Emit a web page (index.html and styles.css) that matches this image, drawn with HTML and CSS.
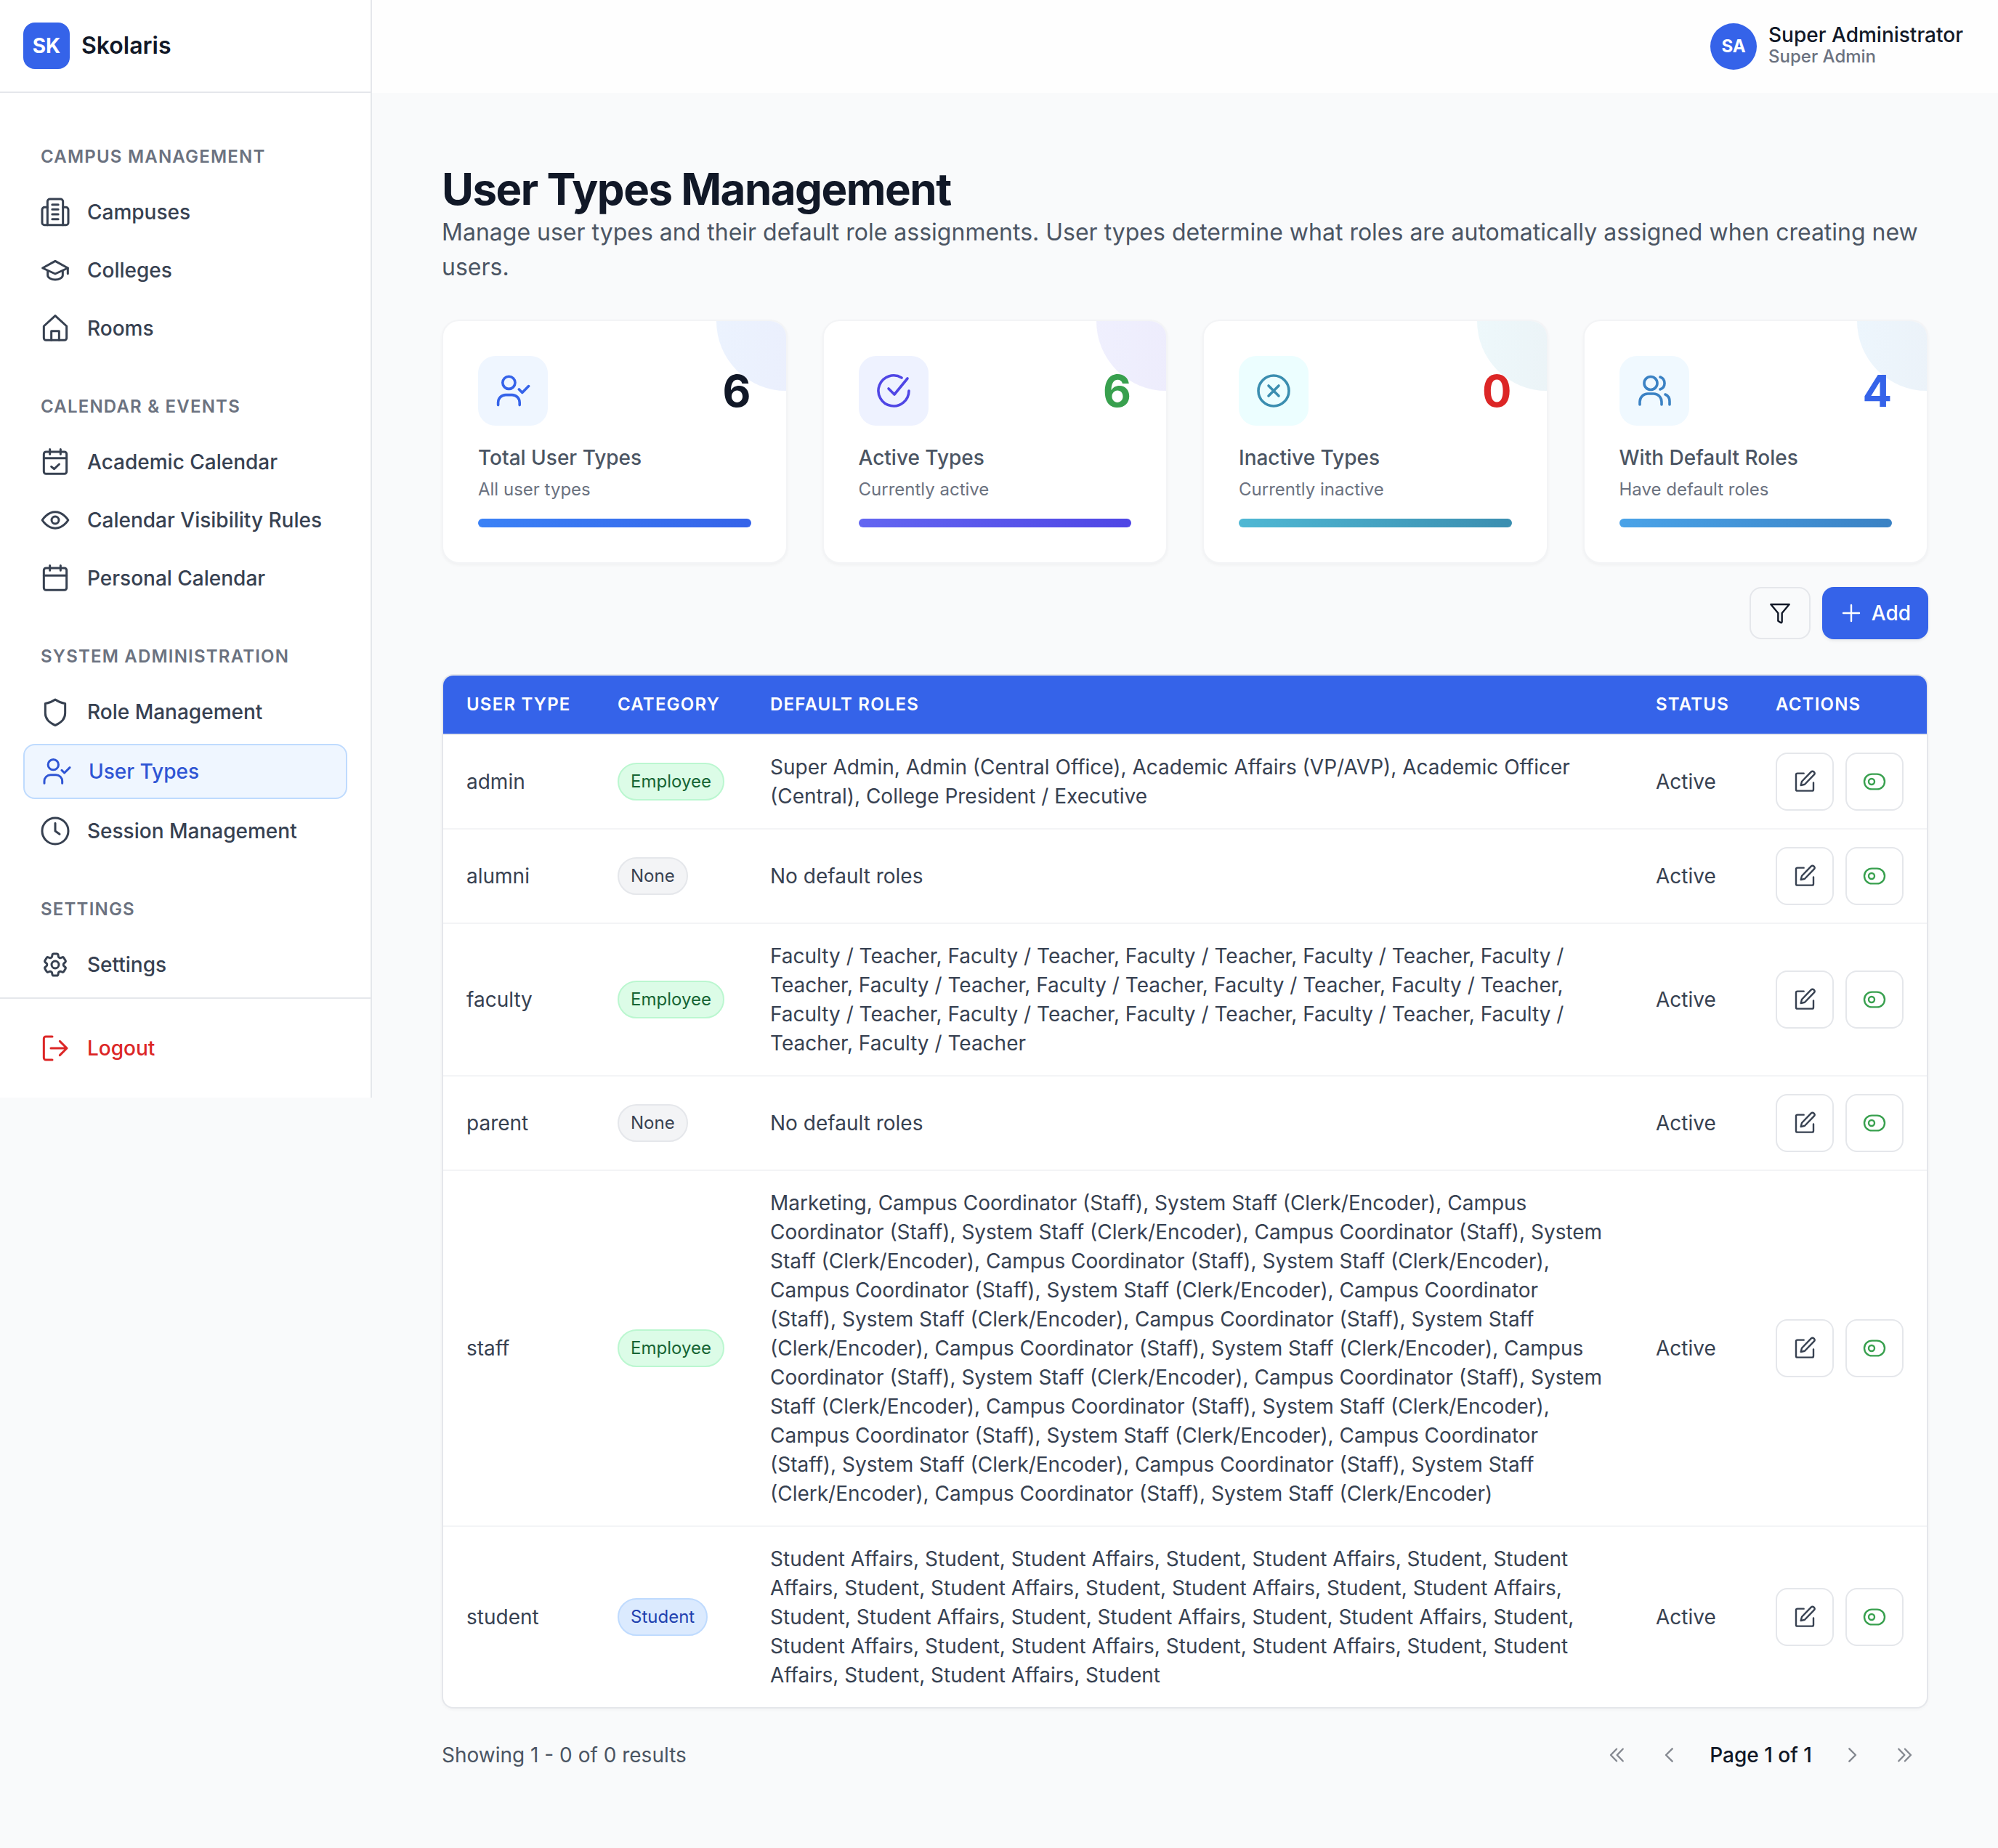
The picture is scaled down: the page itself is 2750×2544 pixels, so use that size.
FILE: index.html
```html
<!DOCTYPE html>
<html lang="en">
<head>
<meta charset="utf-8">
<title>User Types Management</title>
<link rel="stylesheet" href="styles.css">
</head>
<body>
<svg class="sprite" aria-hidden="true">
  <symbol id="i-campus" viewBox="0 0 24 24"><path d="M5.6 22.6V3.2a2 2 0 0 1 2-2h8.8a2 2 0 0 1 2 2v19.4"/><path d="M5.6 8H3.2a2 2 0 0 0-2 2v10.8a1.8 1.8 0 0 0 1.8 1.8h18a1.8 1.8 0 0 0 1.8-1.8V10a2 2 0 0 0-2-2h-2.4"/><path d="M9.5 5.8h5M9.5 9.8h5M9.5 13.8h5M9.5 17.8h5"/></symbol>
  <symbol id="i-cap" viewBox="0 0 24 24"><path d="M1.6 10.200 12 4.400l10.400 5.800L12 15z"/><path d="M5.800 12.600v3.600c0 2 3 3.600 6.200 3.600s6.200-1.600 6.200-3.600v-3.600"/><path d="M22.400 10.200v4.600"/></symbol>
  <symbol id="i-home" viewBox="0 0 24 24"><path d="M2.600 10.200 12 1.600l9.400 8.600v9.800a1.800 1.800 0 0 1-1.800 1.800H4.400a1.800 1.800 0 0 1-1.800-1.800z"/><path d="M8.800 21.800v-7.600h6.400v7.600"/></symbol>
  <symbol id="i-calcheck" viewBox="0 0 24 24"><rect x="2.600" y="3.600" width="18.800" height="18.200" rx="1.800"/><path d="M2.600 8.800h18.800M7.600 1.500v4M16.400 1.500v4M8.800 15.800l2.300 2 4.200-4"/></symbol>
  <symbol id="i-eye" viewBox="0 0 24 24"><path d="M1.300 12S5.400 5.300 12 5.300 22.700 12 22.700 12 18.600 18.700 12 18.700 1.300 12 1.300 12z"/><circle cx="12" cy="12" r="3"/></symbol>
  <symbol id="i-cal" viewBox="0 0 24 24"><rect x="2.600" y="3.600" width="18.800" height="18.200" rx="1.800"/><path d="M2.600 9.800h18.800M7.600 1.500v4M16.400 1.500v4"/></symbol>
  <symbol id="i-shield" viewBox="0 0 24 24"><path d="M12 1.800c2.400 1.700 5 2.800 8.200 3.300v8c0 4.400-3.200 7.900-8.200 10-5-2.100-8.200-5.600-8.200-10v-8C7 4.600 9.600 3.500 12 1.800z"/></symbol>
  <symbol id="i-usercheck" viewBox="0 0 24 24"><circle cx="9.200" cy="6.400" r="4.300"/><path d="M1.800 21.800v-1.800a5.200 5.200 0 0 1 5.200-5.200h4.400a5.200 5.200 0 0 1 5.200 5.200v1.800"/><path d="m16.200 11 2.200 2.200 4.400-4.400"/></symbol>
  <symbol id="i-clock" viewBox="0 0 24 24"><circle cx="12" cy="12" r="10.800"/><path d="M12 5.600V12l3.600 2.600"/></symbol>
  <symbol id="i-gear" viewBox="0 0 24 24"><path d="M9.594 3.940c.09-.542.56-.94 1.110-.94h2.593c.55 0 1.020.398 1.110.94l.213 1.281c.063.374.313.686.645.870.074.04.147.083.22.127.325.196.72.257 1.075.124l1.217-.456a1.125 1.125 0 0 1 1.370.49l1.296 2.247a1.125 1.125 0 0 1-.26 1.431l-1.003.827c-.293.241-.438.613-.43.992a7.723 7.723 0 0 1 0 .255c-.008.378.137.75.43.991l1.004.827c.424.35.534.955.26 1.430l-1.298 2.247a1.125 1.125 0 0 1-1.369.491l-1.217-.456c-.355-.133-.75-.072-1.076.124a6.470 6.470 0 0 1-.22.128c-.331.183-.581.495-.644.869l-.213 1.281c-.09.543-.56.94-1.110.94h-2.594c-.55 0-1.019-.398-1.110-.94l-.213-1.281c-.062-.374-.312-.686-.644-.87a6.520 6.520 0 0 1-.22-.127c-.325-.196-.72-.257-1.076-.124l-1.217.456a1.125 1.125 0 0 1-1.369-.49l-1.297-2.247a1.125 1.125 0 0 1 .26-1.431l1.004-.827c.292-.24.437-.613.43-.991a6.932 6.932 0 0 1 0-.255c.007-.38-.138-.751-.43-.992l-1.004-.827a1.125 1.125 0 0 1-.26-1.430l1.297-2.247a1.125 1.125 0 0 1 1.370-.491l1.216.456c.356.133.751.072 1.076-.124.072-.044.146-.086.22-.128.332-.183.582-.495.644-.869l.214-1.280Z"/><circle cx="12" cy="12" r="3"/></symbol>
  <symbol id="i-logout" viewBox="0 0 24 24"><path d="M9.600 2.400H4.200a1.600 1.600 0 0 0-1.600 1.600v16a1.600 1.600 0 0 0 1.600 1.600h5.400"/><path d="M8.400 12h13.200M15.800 6.200l5.800 5.800-5.800 5.800"/></symbol>
  <symbol id="i-checkcircle" viewBox="0 0 24 24"><path d="M22.500 12A10.500 10.500 0 1 1 17.500 3"/><path d="m8.500 10.500 4 4 9-11"/></symbol>
  <symbol id="i-xcircle" viewBox="0 0 24 24"><circle cx="12" cy="12" r="10.500"/><path d="m8.500 8.500 7 7M15.500 8.500l-7 7"/></symbol>
  <symbol id="i-users" viewBox="0 0 24 24"><circle cx="9.500" cy="6.750" r="4.500"/><path d="M2 21.500v-2a5.500 5.500 0 0 1 5.500-5.500h4a5.500 5.500 0 0 1 5.500 5.500v2"/><path d="M16 2.500a4.500 4.500 0 0 1 0 8.500"/><path d="M19.500 14.500c1.900.8 3 2.600 3 4.700v2.300"/></symbol>
  <symbol id="i-filter" viewBox="0 0 24 24"><path d="M2.500 3h19L14 12v9c0 .8-.9 1.200-1.500.8L10 20v-8z"/></symbol>
  <symbol id="i-plus" viewBox="0 0 24 24"><path d="M12 3.750v16.500M3.750 12h16.500"/></symbol>
  <symbol id="i-edit" viewBox="0 0 24 24"><path d="M11 3.500H4.500A1.500 1.500 0 0 0 3 5v15a1.500 1.500 0 0 0 1.500 1.500h15A1.500 1.500 0 0 0 21 20v-7"/><path d="M18.500 2a2.100 2.100 0 0 1 3 3L12 14.800l-4 1 1-4z"/></symbol>
  <symbol id="i-toggle" viewBox="0 0 24 24"><rect x="1.500" y="4.250" width="21" height="15.500" rx="7.750"/><circle cx="9" cy="12" r="3"/></symbol>
  <symbol id="i-first" viewBox="0 0 24 24"><path d="M12 5.800 6 12l6 6.200M18.500 5.800 12.500 12l6 6.200"/></symbol>
  <symbol id="i-prev" viewBox="0 0 24 24"><path d="M15.500 5.500 9 12l6.500 6.500"/></symbol>
  <symbol id="i-next" viewBox="0 0 24 24"><path d="m8.500 5.500 6.500 6.500-6.500 6.500"/></symbol>
  <symbol id="i-last" viewBox="0 0 24 24"><path d="m5.500 5.800 6 6.200-6 6.200M12 5.800l6 6.200-6 6.200"/></symbol>
</svg>

<div class="app">
  <aside class="sidebar">
    <div class="brand">
      <div class="brand-logo">SK</div>
      <span class="brand-name">Skolaris</span>
    </div>
    <nav class="nav">
      <section class="nav-section">
        <h2 class="nav-title">Campus Management</h2>
        <a class="nav-item"><svg class="icon nav-icon"><use href="#i-campus"/></svg>Campuses</a>
        <a class="nav-item"><svg class="icon nav-icon"><use href="#i-cap"/></svg>Colleges</a>
        <a class="nav-item"><svg class="icon nav-icon"><use href="#i-home"/></svg>Rooms</a>
      </section>
      <section class="nav-section">
        <h2 class="nav-title">Calendar &amp; Events</h2>
        <a class="nav-item"><svg class="icon nav-icon"><use href="#i-calcheck"/></svg>Academic Calendar</a>
        <a class="nav-item"><svg class="icon nav-icon"><use href="#i-eye"/></svg>Calendar Visibility Rules</a>
        <a class="nav-item"><svg class="icon nav-icon"><use href="#i-cal"/></svg>Personal Calendar</a>
      </section>
      <section class="nav-section">
        <h2 class="nav-title">System Administration</h2>
        <a class="nav-item"><svg class="icon nav-icon"><use href="#i-shield"/></svg>Role Management</a>
        <a class="nav-item nav-item-active"><svg class="icon nav-icon"><use href="#i-usercheck"/></svg>User Types</a>
        <a class="nav-item"><svg class="icon nav-icon"><use href="#i-clock"/></svg>Session Management</a>
      </section>
      <section class="nav-section">
        <h2 class="nav-title">Settings</h2>
        <a class="nav-item"><svg class="icon nav-icon"><use href="#i-gear"/></svg>Settings</a>
      </section>
    </nav>
    <div class="sidebar-foot">
      <a class="nav-item nav-item-danger"><svg class="icon nav-icon"><use href="#i-logout"/></svg>Logout</a>
    </div>
  </aside>

  <div class="content">
    <header class="topbar">
      <div class="avatar">SA</div>
      <div class="user">
        <div class="user-name">Super Administrator</div>
        <div class="user-role">Super Admin</div>
      </div>
    </header>

    <main class="main">
      <h1 class="page-title">User Types Management</h1>
      <p class="page-sub">Manage user types and their default role assignments. User types determine what roles are automatically assigned when creating new users.</p>

      <div class="stats">
        <article class="stat stat-blue">
          <span class="stat-decor"></span>
          <div class="stat-top">
            <div class="stat-icon"><svg class="icon icon-48"><use href="#i-usercheck"/></svg></div>
            <div class="stat-value">6</div>
          </div>
          <div class="stat-label">Total User Types</div>
          <div class="stat-sub">All user types</div>
          <div class="stat-bar"></div>
        </article>
        <article class="stat stat-indigo">
          <span class="stat-decor"></span>
          <div class="stat-top">
            <div class="stat-icon"><svg class="icon icon-48"><use href="#i-checkcircle"/></svg></div>
            <div class="stat-value">6</div>
          </div>
          <div class="stat-label">Active Types</div>
          <div class="stat-sub">Currently active</div>
          <div class="stat-bar"></div>
        </article>
        <article class="stat stat-teal">
          <span class="stat-decor"></span>
          <div class="stat-top">
            <div class="stat-icon"><svg class="icon icon-48"><use href="#i-xcircle"/></svg></div>
            <div class="stat-value">0</div>
          </div>
          <div class="stat-label">Inactive Types</div>
          <div class="stat-sub">Currently inactive</div>
          <div class="stat-bar"></div>
        </article>
        <article class="stat stat-sky">
          <span class="stat-decor"></span>
          <div class="stat-top">
            <div class="stat-icon"><svg class="icon icon-48"><use href="#i-users"/></svg></div>
            <div class="stat-value">4</div>
          </div>
          <div class="stat-label">With Default Roles</div>
          <div class="stat-sub">Have default roles</div>
          <div class="stat-bar"></div>
        </article>
      </div>

      <div class="toolbar">
        <button class="btn btn-ghost"><svg class="icon icon-32"><use href="#i-filter"/></svg></button>
        <button class="btn btn-primary"><svg class="icon icon-32"><use href="#i-plus"/></svg>Add</button>
      </div>

      <div class="table-wrap">
        <table class="table">
          <colgroup>
            <col class="col-type"><col class="col-cat"><col class="col-roles"><col class="col-status"><col class="col-actions">
          </colgroup>
          <thead>
            <tr><th>User Type</th><th>Category</th><th>Default Roles</th><th>Status</th><th>Actions</th></tr>
          </thead>
          <tbody>
            <tr>
              <td>admin</td>
              <td><span class="badge badge-green">Employee</span></td>
              <td>Super Admin, Admin (Central Office), Academic Affairs (VP/AVP), Academic Officer (Central), College President / Executive</td>
              <td>Active</td>
              <td><div class="actions"><button class="act"><svg class="icon icon-32"><use href="#i-edit"/></svg></button><button class="act act-green"><svg class="icon icon-32"><use href="#i-toggle"/></svg></button></div></td>
            </tr>
            <tr>
              <td>alumni</td>
              <td><span class="badge badge-gray">None</span></td>
              <td>No default roles</td>
              <td>Active</td>
              <td><div class="actions"><button class="act"><svg class="icon icon-32"><use href="#i-edit"/></svg></button><button class="act act-green"><svg class="icon icon-32"><use href="#i-toggle"/></svg></button></div></td>
            </tr>
            <tr>
              <td>faculty</td>
              <td><span class="badge badge-green">Employee</span></td>
              <td>Faculty / Teacher, Faculty / Teacher, Faculty / Teacher, Faculty / Teacher, Faculty / Teacher, Faculty / Teacher, Faculty / Teacher, Faculty / Teacher, Faculty / Teacher, Faculty / Teacher, Faculty / Teacher, Faculty / Teacher, Faculty / Teacher, Faculty / Teacher, Faculty / Teacher</td>
              <td>Active</td>
              <td><div class="actions"><button class="act"><svg class="icon icon-32"><use href="#i-edit"/></svg></button><button class="act act-green"><svg class="icon icon-32"><use href="#i-toggle"/></svg></button></div></td>
            </tr>
            <tr>
              <td>parent</td>
              <td><span class="badge badge-gray">None</span></td>
              <td>No default roles</td>
              <td>Active</td>
              <td><div class="actions"><button class="act"><svg class="icon icon-32"><use href="#i-edit"/></svg></button><button class="act act-green"><svg class="icon icon-32"><use href="#i-toggle"/></svg></button></div></td>
            </tr>
            <tr>
              <td>staff</td>
              <td><span class="badge badge-green">Employee</span></td>
              <td>Marketing, Campus Coordinator (Staff), System Staff (Clerk/Encoder), Campus Coordinator (Staff), System Staff (Clerk/Encoder), Campus Coordinator (Staff), System Staff (Clerk/Encoder), Campus Coordinator (Staff), System Staff (Clerk/Encoder), Campus Coordinator (Staff), System Staff (Clerk/Encoder), Campus Coordinator (Staff), System Staff (Clerk/Encoder), Campus Coordinator (Staff), System Staff (Clerk/Encoder), Campus Coordinator (Staff), System Staff (Clerk/Encoder), Campus Coordinator (Staff), System Staff (Clerk/Encoder), Campus Coordinator (Staff), System Staff (Clerk/Encoder), Campus Coordinator (Staff), System Staff (Clerk/Encoder), Campus Coordinator (Staff), System Staff (Clerk/Encoder), Campus Coordinator (Staff), System Staff (Clerk/Encoder), Campus Coordinator (Staff), System Staff (Clerk/Encoder), Campus Coordinator (Staff), System Staff (Clerk/Encoder)</td>
              <td>Active</td>
              <td><div class="actions"><button class="act"><svg class="icon icon-32"><use href="#i-edit"/></svg></button><button class="act act-green"><svg class="icon icon-32"><use href="#i-toggle"/></svg></button></div></td>
            </tr>
            <tr>
              <td>student</td>
              <td><span class="badge badge-blue">Student</span></td>
              <td>Student Affairs, Student, Student Affairs, Student, Student Affairs, Student, Student Affairs, Student, Student Affairs, Student, Student Affairs, Student, Student Affairs, Student, Student Affairs, Student, Student Affairs, Student, Student Affairs, Student, Student Affairs, Student, Student Affairs, Student, Student Affairs, Student, Student Affairs, Student, Student Affairs, Student</td>
              <td>Active</td>
              <td><div class="actions"><button class="act"><svg class="icon icon-32"><use href="#i-edit"/></svg></button><button class="act act-green"><svg class="icon icon-32"><use href="#i-toggle"/></svg></button></div></td>
            </tr>
          </tbody>
        </table>
      </div>

      <div class="pager">
        <span class="pager-info">Showing 1 - 0 of 0 results</span>
        <div class="pager-nav">
          <button class="page-btn"><svg class="icon icon-32"><use href="#i-first"/></svg></button>
          <button class="page-btn"><svg class="icon icon-32"><use href="#i-prev"/></svg></button>
          <span class="page-label">Page 1 of 1</span>
          <button class="page-btn"><svg class="icon icon-32"><use href="#i-next"/></svg></button>
          <button class="page-btn"><svg class="icon icon-32"><use href="#i-last"/></svg></button>
        </div>
      </div>
    </main>
  </div>
</div>
</body>
</html>
```

FILE: styles.css
```css
* { box-sizing: border-box; }
html, body { margin: 0; padding: 0; }
body {
  font-family: Inter, "Noto Sans", "Liberation Sans", sans-serif;
  background: #f9fafb;
  color: #374151;
  font-size: 28px;
  line-height: 40px;
}
.sprite { position: absolute; width: 0; height: 0; overflow: hidden; }
.icon {
  fill: none;
  stroke: currentColor;
  stroke-width: 1.8;
  stroke-linecap: round;
  stroke-linejoin: round;
  flex: none;
  display: block;
}
.icon-48 { width: 48px; height: 48px; }
.icon-32 { width: 32px; height: 32px; }

.app { display: flex; align-items: flex-start; width: 2750px; min-height: 2544px; }

/* Sidebar */
.sidebar {
  width: 512px;
  flex: none;
  background: #fff;
  border-right: 2px solid #e5e7eb;
}
.brand {
  height: 128px;
  display: flex;
  align-items: center;
  gap: 16px;
  padding-left: 32px;
  border-bottom: 2px solid #e5e7eb;
}
.brand-logo {
  width: 64px;
  height: 64px;
  border-radius: 16px;
  background: #3563e9;
  color: #fff;
  font-weight: 700;
  font-size: 28px;
  display: flex;
  align-items: center;
  justify-content: center;
}
.brand-name { font-size: 32px; font-weight: 600; color: #111827; }

.nav { padding: 72px 32px 9px; display: flex; flex-direction: column; gap: 56px; }
.nav-section { display: flex; flex-direction: column; gap: 8px; }
.nav-title {
  margin: 0 0 16px;
  padding-left: 24px;
  font-size: 24px;
  line-height: 32px;
  font-weight: 600;
  letter-spacing: 1.2px;
  text-transform: uppercase;
  color: #6b7280;
}
.nav-item {
  display: flex;
  align-items: center;
  gap: 24px;
  padding: 16px 24px;
  border-radius: 16px;
  font-size: 28px;
  line-height: 40px;
  font-weight: 500;
  color: #374151;
}
.nav-icon { width: 40px; height: 40px; }
.nav-item-active {
  background: #eff6ff;
  border: 2px solid #bfdbfe;
  color: #2f55d4;
}
.nav-item-danger { color: #dc2626; }
.sidebar-foot { padding: 32px; border-top: 2px solid #e5e7eb; }

/* Top bar */
.content { flex: 1; min-width: 0; }
.topbar {
  height: 128px;
  background: #fefefe;
  display: flex;
  align-items: center;
  justify-content: flex-end;
  gap: 16px;
  padding-right: 48px;
}
.avatar {
  width: 64px;
  height: 64px;
  border-radius: 50%;
  background: #3563e9;
  color: #fff;
  font-size: 24px;
  font-weight: 700;
  display: flex;
  align-items: center;
  justify-content: center;
}
.user-name { font-size: 28px; line-height: 28px; font-weight: 500; color: #111827; }
.user-role { font-size: 24px; line-height: 32px; font-weight: 500; color: #6b7280; }

/* Main */
.main { padding: 96px; }
.page-title {
  margin: 0;
  font-size: 60px;
  line-height: 72px;
  font-weight: 700;
  letter-spacing: -1.5px;
  color: #111827;
}
.page-sub { margin: 0 0 48px; font-size: 32px; line-height: 48px; color: #4b5563; }

.stats { display: grid; grid-template-columns: repeat(4, 1fr); gap: 48px; margin-bottom: 32px; }
.stat {
  position: relative;
  overflow: hidden;
  background: #fff;
  border: 2px solid #f3f4f6;
  border-radius: 24px;
  padding: 48px;
  box-shadow: 0 2px 4px rgba(0, 0, 0, 0.04);
}
.stat-decor {
  position: absolute;
  top: 0;
  right: 0;
  width: 96px;
  height: 96px;
  border-bottom-left-radius: 100%;
  opacity: 0.1;
}
.stat-top { display: flex; align-items: center; justify-content: space-between; }
.stat-icon {
  width: 96px;
  height: 96px;
  border-radius: 24px;
  display: flex;
  align-items: center;
  justify-content: center;
}
.stat-value { position: relative; font-size: 60px; line-height: 72px; font-weight: 700; }
.stat-label { margin-top: 24px; font-size: 28px; line-height: 40px; font-weight: 500; color: #4b5563; }
.stat-sub { margin-top: 8px; font-size: 24px; line-height: 32px; color: #6b7280; }
.stat-bar { margin-top: 24px; height: 12px; border-radius: 6px; }

.stat-blue .stat-icon { background: #eff6ff; color: #3563e9; }
.stat-blue .stat-value { color: #111827; }
.stat-blue .stat-bar, .stat-blue .stat-decor { background: linear-gradient(90deg, #3b82f6, #3563e9); }
.stat-indigo .stat-icon { background: #eef2ff; color: #4f46e5; }
.stat-indigo .stat-value { color: #38a04e; }
.stat-indigo .stat-bar, .stat-indigo .stat-decor { background: linear-gradient(90deg, #6366f1, #4f46e5); }
.stat-teal .stat-icon { background: #ecfeff; color: #3b8eb0; }
.stat-teal .stat-value { color: #dc2626; }
.stat-teal .stat-bar, .stat-teal .stat-decor { background: linear-gradient(90deg, #4fb8d4, #3b8eb0); }
.stat-sky .stat-icon { background: #f0f9ff; color: #3b82c4; }
.stat-sky .stat-value { color: #3563e9; }
.stat-sky .stat-bar, .stat-sky .stat-decor { background: linear-gradient(90deg, #4aa3e8, #3b82c4); }

/* Toolbar */
.toolbar { display: flex; justify-content: flex-end; gap: 16px; margin-bottom: 48px; }
.btn {
  height: 72px;
  padding: 0 24px;
  border-radius: 16px;
  display: flex;
  align-items: center;
  gap: 12px;
  font: inherit;
  font-weight: 500;
  cursor: pointer;
}
.btn-ghost { background: transparent; border: 2px solid #e5e7eb; color: #111827; }
.btn-primary { background: #3563e9; border: 0; color: #fff; box-shadow: 0 2px 4px rgba(0, 0, 0, 0.08); }

/* Table */
.table-wrap {
  background: #fff;
  border: 2px solid #e5e7eb;
  border-radius: 16px;
  overflow: hidden;
  box-shadow: 0 2px 4px rgba(0, 0, 0, 0.03);
}
.table { width: 100%; table-layout: fixed; border-collapse: separate; border-spacing: 0; }
.col-type { width: 208px; }
.col-cat { width: 210px; }
.col-status { width: 165px; }
.col-actions { width: 240px; }
.table th {
  height: 82px;
  padding: 0 32px;
  background: #3563e9;
  border-bottom: 2px solid #e5e7eb;
  color: #fff;
  font-size: 24px;
  line-height: 32px;
  font-weight: 600;
  letter-spacing: 1.2px;
  text-align: left;
  text-transform: uppercase;
}
.table td {
  padding: 24px 32px;
  border-bottom: 2px solid #f3f4f6;
  vertical-align: middle;
  font-size: 28px;
  line-height: 40px;
  color: #374151;
}
.table tbody tr:last-child td { border-bottom: 0; }
.badge {
  display: inline-block;
  padding: 8px 16px;
  border: 2px solid;
  border-radius: 26px;
  font-size: 24px;
  line-height: 32px;
  font-weight: 400;
  vertical-align: middle;
}
.badge-green { background: #dcfce7; border-color: #bbf7d0; color: #166534; }
.badge-gray { background: #f3f4f6; border-color: #e5e7eb; color: #374151; }
.badge-blue { background: #dbeafe; border-color: #bfdbfe; color: #1e40af; }
.actions { display: flex; gap: 16px; }
.act {
  width: 80px;
  height: 80px;
  padding: 0;
  background: #fff;
  border: 2px solid #e5e7eb;
  border-radius: 16px;
  color: #374151;
  display: flex;
  align-items: center;
  justify-content: center;
}
.act-green { color: #38a04e; }

/* Pager */
.pager { margin-top: 32px; display: flex; align-items: center; justify-content: space-between; height: 64px; }
.pager-info { color: #4b5563; }
.pager-nav { display: flex; align-items: center; gap: 8px; }
.page-btn {
  width: 64px;
  height: 64px;
  padding: 0;
  background: transparent;
  border: 0;
  color: #111827;
  opacity: 0.5;
  display: flex;
  align-items: center;
  justify-content: center;
}
.page-label { padding: 0 16px; font-weight: 500; color: #111827; }
```
